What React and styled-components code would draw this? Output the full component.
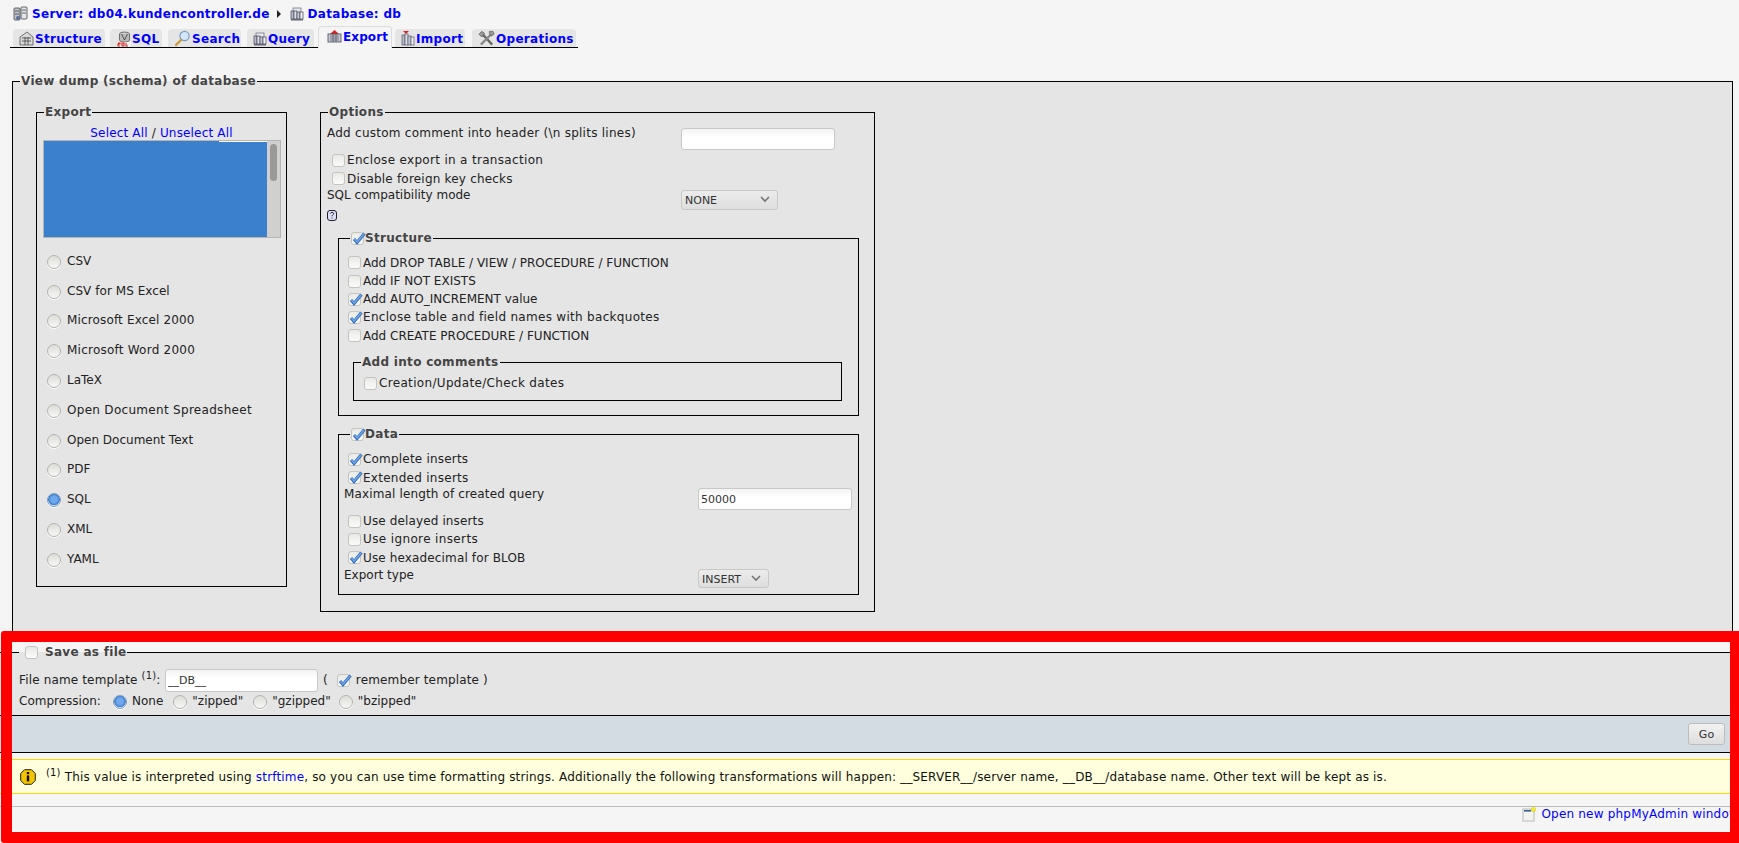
import React from 'react';
import styled, { createGlobalStyle } from 'styled-components';

const GlobalStyle = createGlobalStyle`
  html, body {
    margin: 0;
    padding: 0;
    height: 100%;
    overflow: hidden;
    background: #f5f5f5;
  }
  body {
    font-family: "DejaVu Sans", sans-serif;
    font-size: 12px;
    color: #222;
  }
  * { box-sizing: border-box; }
`;

const Page = styled.div`
  position: relative;
  height: 100vh;
  overflow: hidden;
  background: #f5f5f5;
`;

/* breadcrumb and tabs */
const Crumbs = styled.div`
  display: flex;
  align-items: center;
  height: 14px;
  margin: 7px 0 0 13px;
  font-weight: bold;
  letter-spacing: .3px;
  color: #00f;
  line-height: 14px;
`;

const CrumbArrow = styled.span`
  width: 0;
  height: 0;
  margin: 0 9px 0 7px;
  border-left: 4px solid #222;
  border-top: 4px solid transparent;
  border-bottom: 4px solid transparent;
`;

const CrumbLink = styled.a`
  margin-left: 4px;
  color: #00f;
  text-decoration: none;
`;

const Tabs = styled.div`
  display: flex;
  align-items: flex-end;
  height: 27px;
  margin: 0 0 0 10px;
  width: 568px;
  border-bottom: 1px solid #000;
`;

const Tab = styled.a`
  display: flex;
  align-items: center;
  height: ${p => (p.$active ? 22 : 18)}px;
  width: ${p => p.$w}px;
  margin-left: ${p => p.$gap}px;
  margin-bottom: ${p => (p.$active ? -1 : 0)}px;
  padding: ${p => (p.$active ? '0 0 2px 8px' : '0 0 0 5px')};
  background: ${p => (p.$active ? '#f5f5f5' : '#e5e5e5')};
  border: 1px solid ${p => (p.$active ? '#ddd' : '#e5e5e5')};
  border-bottom: 0;
  border-radius: 4px 4px 0 0;
  color: #00f;
  font-weight: bold;
  letter-spacing: ${p => (p.$active ? 0.1 : 0.3)}px;
  line-height: 14px;
  text-decoration: none;
  white-space: nowrap;
  svg { flex: none; margin-right: 1px; }
`;

/* fieldsets */
const MainSet = styled.fieldset`
  margin: 26px 6px 0 12px;
  padding: 17px 0 30px;
  height: 565px;
  min-width: 0;
  background: #e5e5e5;
  border: 1px solid #000;
`;

const Legend = styled.legend`
  display: flex;
  align-items: center;
  height: 14px;
  padding: 0 1px;
  margin-left: ${p => p.$left || 0}px;
  color: #444;
  font-weight: bold;
  letter-spacing: .3px;
  line-height: 14px;
  white-space: nowrap;
`;

const Columns = styled.div`
  display: flex;
  align-items: flex-start;
  padding-left: 23px;
  gap: 33px;
`;

const ExportSet = styled.fieldset`
  width: 251px;
  height: 482px;
  margin: 0;
  padding: 7px 6px 0;
  border: 1px solid #000;
  min-width: 0;
`;

const OptionsSet = styled.fieldset`
  width: 555px;
  margin: 0;
  padding: 7px 6px 16px;
  border: 1px solid #000;
  min-width: 0;
`;

const SubSet = styled.fieldset`
  width: ${p => p.$w}px;
  margin: ${p => p.$top}px 0 0 ${p => p.$left}px;
  padding: ${p => p.$pad};
  border: 1px solid #000;
  min-width: 0;
`;

const SelectLinks = styled.div`
  height: 14px;
  line-height: 14px;
  letter-spacing: .17px;
  text-align: center;
  color: #222;
`;

const Link = styled.a`
  color: #00f;
  text-decoration: none;
`;

const ListBox = styled.div`
  display: flex;
  height: 98px;
  width: 238px;
  border: 1px solid #b5b5b5;
  background: #d0d1cf;
`;

const ListFill = styled.div`
  flex: 1;
  background: #3b80cc;
  border-top: 1px solid #fff;
  border-image: linear-gradient(to right, #3b80cc 78%, #fff 78%) 1;
`;

const ListTrack = styled.div`
  width: 13px;
  padding: 3px 3px;
`;

const ListThumb = styled.div`
  height: 37px;
  border-radius: 4px;
  background: #999;
`;

const RadioList = styled.div`
  margin-top: 8px;
`;

const RadioRow = styled.label`
  display: flex;
  align-items: center;
  height: 29.8px;
  padding-left: 4px;
  gap: 6px;
  letter-spacing: ${p => p.$ls || 0}px;
`;

const RadioDot = styled.span`
  flex: none;
  width: 14px;
  height: 14px;
  margin-top: 2px;
  border-radius: 50%;
  border: 1px solid ${p => (p.$on ? '#7d9cc0' : '#b4b4b0')};
  background: ${p =>
    p.$on
      ? 'radial-gradient(circle at 50% 45%, #6fa8ec 0 35%, #3f7fd0 62%, #dfe6ee 68%)'
      : 'linear-gradient(#dcdcd9, #f8f8f6)'};
  box-shadow: 0 1px 0 #fff;
`;

const Row = styled.div`
  display: flex;
  align-items: flex-start;
  height: ${p => p.$h}px;
  line-height: 14px;
`;

const RowLabel = styled.div`
  flex: none;
  width: ${p => p.$w || 354}px;
  padding-top: ${p => p.$top || 0}px;
  letter-spacing: ${p => p.$ls || 0}px;
`;

const CheckRow = styled.label`
  display: flex;
  align-items: center;
  height: ${p => p.$h || 18}px;
  padding-left: ${p => p.$left || 5}px;
  gap: 2px;
  line-height: 14px;
  letter-spacing: ${p => p.$ls || 0}px;
`;

const Box = styled.span`
  position: relative;
  flex: none;
  display: inline-block;
  width: 13px;
  height: 13px;
  border-radius: 3px;
  border: 1px solid #c4c4c0;
  background: linear-gradient(#e9e9e6, #fbfbfa);
  svg { position: absolute; left: 0; top: -2px; }
`;

const TextInput = styled.input`
  display: block;
  flex: none;
  width: ${p => p.$w}px;
  height: ${p => p.$h || 22}px;
  margin-top: ${p => p.$top || 0}px;
  padding: 1px 2px 0;
  border: 1px solid #c8c8c4;
  border-radius: 3px;
  background: linear-gradient(#f3f3f3, #fff 40%);
  color: #333;
  font: 11px "DejaVu Sans", sans-serif;
  outline: none;
`;

const SelectWrap = styled.span`
  position: relative;
  display: block;
  width: ${p => p.$w}px;
  height: ${p => p.$h}px;
  margin-top: 2px;
  svg { position: absolute; right: 8px; top: 6px; }
`;

const Select = styled.select`
  width: 100%;
  height: 100%;
  padding: 1px 0 0 3px;
  appearance: none;
  border: 1px solid #c8c8c4;
  border-radius: 3px;
  background: linear-gradient(#ececec, #dedede);
  color: #333;
  font: 11px "DejaVu Sans", sans-serif;
`;

const Help = styled.div`
  height: 12px;
  line-height: 0;
`;

/* save as file section */
const SaveSet = styled.fieldset`
  margin: 6px 0 0;
  padding: 9px 0 0 19px;
  height: 70px;
  background: #e5e5e5;
  border: 0;
  border-top: 1px solid #000;
  min-width: 0;
`;

const LegendBox = styled(Box)`
  margin: 0 7px 0 5px;
`;

const SaveRow = styled.div`
  display: flex;
  align-items: center;
  height: ${p => p.$h}px;
  line-height: 14px;
  white-space: nowrap;
`;

const SaveLabel = styled.span`
  flex: none;
  width: ${p => p.$w}px;
  letter-spacing: ${p => p.$ls || 0}px;
`;

const Paren = styled.span`
  margin: 0 ${p => p.$right}px 0 ${p => p.$left}px;
  letter-spacing: .15px;
`;

const Sup = styled.sup`
  font-size: 10px;
  line-height: 0;
  vertical-align: 5px;
`;

const Compress = styled.span`
  display: inline-flex;
  align-items: center;
  margin-left: ${p => p.$left}px;
  gap: ${p => p.$gap}px;
`;

const SmallDot = styled(RadioDot)`
  margin-top: 1px;
`;

const FooterBar = styled.div`
  display: flex;
  justify-content: flex-end;
  align-items: center;
  height: 38px;
  padding-right: 14px;
  background: #d3dce3;
  border-top: 1px solid #000;
  border-bottom: 1px solid #000;
`;

const GoButton = styled.button`
  width: 37px;
  height: 22px;
  padding: 0;
  border: 1px solid #bdbdbd;
  border-radius: 3px;
  background: linear-gradient(#f2f2f2, #dedede);
  color: #333;
  font: 11px "DejaVu Sans", sans-serif;
`;

const Notice = styled.div`
  display: flex;
  align-items: center;
  height: 35px;
  margin-top: 6px;
  padding-left: 20px;
  background: #ffd;
  border-top: 1px solid #ffd700;
  border-bottom: 1px solid #ffd700;
  color: #111;
  white-space: nowrap;
  svg { margin-right: 10px; flex: none; }
`;

const NoticeText = styled.span`
  letter-spacing: .17px;
`;

const BottomRule = styled.div`
  display: flex;
  justify-content: flex-end;
  align-items: center;
  height: 15px;
  margin-top: 12px;
  border-top: 1px solid #bbb;
  letter-spacing: .2px;
  line-height: 14px;
  white-space: nowrap;
  svg { margin-right: 5px; }
`;

const RedFrame = styled.div`
  position: absolute;
  left: 1px;
  right: 0;
  top: 631px;
  bottom: 0;
  border: solid #f00;
  border-width: 11px 9px 11px 11px;
  border-radius: 3px 0 0 3px;
  pointer-events: none;
`;

const LegendText = styled.span`
  margin-left: 1px;
`;

/* little drawings */
const DbIcon = ({ size = 14 }) => (
  <svg width={size} height={size} viewBox="0 0 14 14">
    <rect x="3" y="1" width="8" height="6" fill="#e8eaf0" stroke="#667" strokeWidth=".7" />
    <rect x="1" y="4" width="3" height="8" fill="#b8bcc8" stroke="#445" strokeWidth=".7" />
    <rect x="4" y="4" width="3" height="8" fill="#dfe2ea" stroke="#445" strokeWidth=".7" />
    <rect x="7" y="5" width="3" height="7" fill="#c5cad8" stroke="#445" strokeWidth=".7" />
    <rect x="10" y="5" width="3" height="7" fill="#eef0f4" stroke="#445" strokeWidth=".7" />
    <rect x="1" y="12" width="12" height="1.5" fill="#667" />
  </svg>
);

const ServerIcon = () => (
  <svg width="15" height="16" viewBox="0 0 15 16">
    <rect x="1" y="2" width="6" height="12" rx="1" fill="#bfc3c9" stroke="#444" strokeWidth=".8" />
    <rect x="8" y="1" width="6" height="12" rx="1" fill="#e3e5e8" stroke="#444" strokeWidth=".8" />
    <path d="M2 5h4M2 8h4M9 4h4M9 7h4" stroke="#445" strokeWidth=".8" />
    <circle cx="5" cy="12" r="2" fill="#5a6f99" />
  </svg>
);

const StructureIcon = () => (
  <svg width="15" height="15" viewBox="0 0 15 15">
    <path d="M1 6 8 1l6 5v8H1z" fill="#d8d8d8" stroke="#555" strokeWidth=".8" />
    <path d="M3 7h9M3 10h9M6 6v8M9 6v8" stroke="#444" strokeWidth=".8" />
  </svg>
);

const SqlIcon = () => (
  <svg width="15" height="16" viewBox="0 0 15 16">
    <ellipse cx="8.5" cy="3" rx="5" ry="2" fill="#ccc" stroke="#555" strokeWidth=".8" />
    <path d="M3.5 3v6c0 1 2 2 5 2s5-1 5-2V3" fill="#bbb" stroke="#555" strokeWidth=".8" />
    <path d="M5.5 3l3 6 3-6" fill="none" stroke="#333" strokeWidth=".8" />
    <rect x="1" y="11" width="14" height="5" fill="#fff" opacity=".5" />
    <path d="M2 12h2v1H2v2h2M6 12h2v3H6zM10 12v3h2" fill="none" stroke="#d22" strokeWidth="1.1" />
  </svg>
);

const SearchIcon = () => (
  <svg width="17" height="17" viewBox="0 0 17 17">
    <circle cx="10.5" cy="6" r="4.6" fill="#d5e7fa" stroke="#7d9cc0" strokeWidth="1.2" />
    <path d="M7 10 2 15" stroke="#c99a3a" strokeWidth="2.4" strokeLinecap="round" />
  </svg>
);

const ExportIcon = () => (
  <svg width="15" height="15" viewBox="0 0 15 15">
    <path d="M3 5 7.5 1 12 5z" fill="#d22" />
    <rect x="1" y="5" width="13" height="8" fill="#c8ccd4" stroke="#445" strokeWidth=".8" />
    <path d="M3 7h9M3 9h9M3 11h9M6 5v8M9 5v8" stroke="#556" strokeWidth=".7" />
  </svg>
);

const ImportIcon = () => (
  <svg width="14" height="16" viewBox="0 0 14 16">
    <path d="M2 0h6L5 3z" fill="#d22" />
    <rect x="1" y="4" width="3" height="10" fill="#b8bcc8" stroke="#556" strokeWidth=".7" />
    <rect x="4" y="3" width="3" height="11" fill="#dfe2ea" stroke="#556" strokeWidth=".7" />
    <rect x="7" y="5" width="3" height="9" fill="#c5cad8" stroke="#556" strokeWidth=".7" />
    <rect x="10" y="6" width="3" height="8" fill="#eef0f4" stroke="#556" strokeWidth=".7" />
  </svg>
);

const ToolsIcon = () => (
  <svg width="17" height="17" viewBox="0 0 18 17">
    <path d="M3 2 15 15" stroke="#666" strokeWidth="2.4" />
    <path d="M15 3 3 15" stroke="#888" strokeWidth="2.4" />
    <path d="M1 4l3-3 3 2-3 4zM12 1h4l1 3-3 2-2-3z" fill="#999" stroke="#444" strokeWidth=".6" />
  </svg>
);

const HelpIcon = () => (
  <svg width="10" height="11" viewBox="0 0 10 11">
    <rect x=".5" y=".5" width="9" height="10" rx="2.5" fill="#dfe0f5" stroke="#223" />
    <path d="M3.4 3.6c.2-1.6 3.3-1.6 3.3 0 0 1.2-1.7 1.2-1.7 2.7M5 7.6v1" fill="none" stroke="#223" />
  </svg>
);

const WarnIcon = () => (
  <svg width="16" height="16" viewBox="0 0 16 16">
    <path d="M4.5 .7h7l3.8 3.8v7l-3.8 3.8h-7L.7 11.5v-7z" fill="#f5c400" stroke="#222" />
    <rect x="6.8" y="3" width="2.4" height="2.2" fill="#111" />
    <rect x="6.8" y="6.4" width="2.4" height="6" fill="#111" />
  </svg>
);

const WindowIcon = () => (
  <svg width="14" height="15" viewBox="0 0 14 15">
    <rect x="1" y="2" width="11" height="12" fill="#f3f3f0" stroke="#bbb" />
    <rect x="2" y="3" width="7" height="1.6" fill="#35619e" />
    <circle cx="11.5" cy="2.5" r="2.2" fill="#f4ec2a" stroke="#d8c820" strokeWidth=".5" />
  </svg>
);

const Tick = () => (
  <svg width="14" height="14" viewBox="0 0 14 14">
    <path d="M2 8l3 3.5L12.5 2.5" fill="none" stroke="#3a72b8" strokeWidth="3.2" />
    <path d="M2.4 8l2.7 3L12 3" fill="none" stroke="#6ba4ea" strokeWidth="1.5" />
  </svg>
);

const Chevron = () => (
  <svg width="10" height="7" viewBox="0 0 10 7">
    <path d="M1 1l4 4 4-4" fill="none" stroke="#777" strokeWidth="1.6" />
  </svg>
);

const Check = ({ on }) => <Box>{on && <Tick />}</Box>;

const Option = ({ on, label, h, left, ls }) => (
  <CheckRow $h={h} $left={left} $ls={ls}>
    <Check on={on} />
    {label}
  </CheckRow>
);

const Dropdown = ({ w, h, value }) => (
  <SelectWrap $w={w} $h={h}>
    <Select defaultValue={value}>
      <option>{value}</option>
    </Select>
    <Chevron />
  </SelectWrap>
);

const formats = [
  { name: 'CSV' },
  { name: 'CSV for MS Excel', ls: 0.05 },
  { name: 'Microsoft Excel 2000', ls: 0.15 },
  { name: 'Microsoft Word 2000', ls: 0.23 },
  { name: 'LaTeX' },
  { name: 'Open Document Spreadsheet', ls: 0.3 },
  { name: 'Open Document Text' },
  { name: 'PDF' },
  { name: 'SQL' },
  { name: 'XML' },
  { name: 'YAML' },
];

const tabs = [
  { label: 'Structure', icon: <StructureIcon />, w: 92, gap: 3 },
  { label: 'SQL', icon: <SqlIcon />, w: 52, gap: 5 },
  { label: 'Search', icon: <SearchIcon />, w: 73, gap: 6 },
  { label: 'Query', icon: <DbIcon />, w: 67, gap: 6 },
  { label: 'Export', icon: <ExportIcon />, w: 74, gap: 4, active: true },
  { label: 'Import', icon: <ImportIcon />, w: 70, gap: 3 },
  { label: 'Operations', icon: <ToolsIcon />, w: 104, gap: 7 },
];

export default function App() {
  return (
    <Page>
      <GlobalStyle />
      <Crumbs>
        <ServerIcon />
        <CrumbLink href="#">Server: db04.kundencontroller.de</CrumbLink>
        <CrumbArrow />
        <DbIcon />
        <CrumbLink href="#">Database: db</CrumbLink>
      </Crumbs>
      <Tabs>
        {tabs.map(t => (
          <Tab key={t.label} href="#" $w={t.w} $gap={t.gap} $active={t.active}>
            {t.icon}
            {t.label}
          </Tab>
        ))}
      </Tabs>

      <MainSet>
        <Legend $left={7}>View dump (schema) of database</Legend>
        <Columns>
          <ExportSet>
            <Legend $left={1}>Export</Legend>
            <SelectLinks>
              <Link href="#">Select All</Link> / <Link href="#">Unselect All</Link>
            </SelectLinks>
            <ListBox>
              <ListFill />
              <ListTrack>
                <ListThumb />
              </ListTrack>
            </ListBox>
            <RadioList>
              {formats.map(f => (
                <RadioRow key={f.name} $ls={f.ls}>
                  <RadioDot $on={f.name === 'SQL'} />
                  {f.name}
                </RadioRow>
              ))}
            </RadioList>
          </ExportSet>

          <OptionsSet>
            <Legend $left={1}>Options</Legend>
            <Row $h={25}>
              <RowLabel $ls={0.25}>Add custom comment into header (\n splits lines)</RowLabel>
              <TextInput $w={154} $top={2} />
            </Row>
            <Option ls={0.32} label="Enclose export in a transaction" />
            <Option ls={0.2} label="Disable foreign key checks" h={19} />
            <Row $h={22}>
              <RowLabel>SQL compatibility mode</RowLabel>
              <Dropdown w={97} h={20} value="NONE" />
            </Row>
            <Help>
              <HelpIcon />
            </Help>

            <SubSet $w={521} $top={9} $left={11} $pad="8px 6px 14px">
              <Legend $left={5}>
                <Check on />
                <LegendText>Structure</LegendText>
              </Legend>
              <Option left={3} h={19} label="Add DROP TABLE / VIEW / PROCEDURE / FUNCTION" />
              <Option left={3} label="Add IF NOT EXISTS" />
              <Option left={3} on label="Add AUTO_INCREMENT value" />
              <Option left={3} ls={0.3} on label="Enclose table and field names with backquotes" />
              <Option left={3} label="Add CREATE PROCEDURE / FUNCTION" h={19} />
              <SubSet $w={489} $top={10} $left={8} $pad="5px 6px 8px">
                <Legend $left={1}>Add into comments</Legend>
                <Option left={4} ls={0.33} label="Creation/Update/Check dates" />
              </SubSet>
            </SubSet>

            <SubSet $w={521} $top={11} $left={11} $pad="9px 6px 5px 5px">
              <Legend $left={6}>
                <Check on />
                <LegendText>Data</LegendText>
              </Legend>
              <Option left={4} ls={0.2} on label="Complete inserts" />
              <Option left={4} ls={0.27} on label="Extended inserts" h={19} />
              <Row $h={25}>
                <RowLabel $ls={0.14}>Maximal length of created query</RowLabel>
                <TextInput $w={154} $top={1} defaultValue="50000" />
              </Row>
              <Option left={4} ls={0.13} label="Use delayed inserts" />
              <Option left={4} ls={0.37} label="Use ignore inserts" />
              <Option left={4} ls={0.14} on label="Use hexadecimal for BLOB" h={19} />
              <Row $h={22}>
                <RowLabel $top={1}>Export type</RowLabel>
                <Dropdown w={71} h={19} value="INSERT" />
              </Row>
            </SubSet>
          </OptionsSet>
        </Columns>
      </MainSet>

      <SaveSet>
        <Legend>
          <LegendBox />
          Save as file
        </Legend>
        <SaveRow $h={24}>
          <SaveLabel $w={146} $ls={0.15}>
            File name template <Sup>(1)</Sup>:
          </SaveLabel>
          <TextInput $w={153} $h={23} defaultValue="__DB__" />
          <Paren $left={5} $right={9}>(</Paren>
          <Check on />
          <Paren $left={6} $right={0}>remember template )</Paren>
        </SaveRow>
        <SaveRow $h={18}>
          <SaveLabel $w={94}>Compression:</SaveLabel>
          <Compress $left={0} $gap={5}>
            <SmallDot $on />
            None
          </Compress>
          <Compress $left={10} $gap={5}>
            <SmallDot />
            "zipped"
          </Compress>
          <Compress $left={10} $gap={5}>
            <SmallDot />
            "gzipped"
          </Compress>
          <Compress $left={8} $gap={5}>
            <SmallDot />
            "bzipped"
          </Compress>
        </SaveRow>
      </SaveSet>

      <FooterBar>
        <GoButton type="button">Go</GoButton>
      </FooterBar>

      <Notice>
        <WarnIcon />
        <NoticeText>
          <Sup>(1)</Sup> This value is interpreted using <Link href="#">strftime</Link>, so you can use time formatting strings. Additionally the following transformations will happen: __SERVER__/server name, __DB__/database name. Other text will be kept as is.
        </NoticeText>
      </Notice>

      <BottomRule>
        <WindowIcon />
        <Link href="#">Open new phpMyAdmin window</Link>
      </BottomRule>

      <RedFrame />
    </Page>
  );
}
